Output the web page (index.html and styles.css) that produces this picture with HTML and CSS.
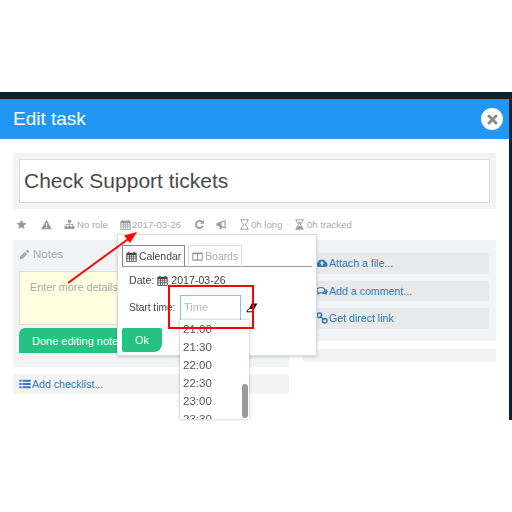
FILE: index.html
```html
<!DOCTYPE html>
<html lang="en">
<head>
<meta charset="utf-8">
<title>Edit task</title>
<link rel="stylesheet" href="styles.css">
</head>
<body>
<svg class="defs" width="0" height="0" aria-hidden="true">
  <defs>
    <symbol id="i-cal" viewBox="0 0 12 12"><path fill="currentColor" fill-rule="evenodd" d="M1 2h1.5V.8h1.2V2h4.6V.8h1.2V2H11a.6.6 0 0 1 .6.6v8.6a.6.6 0 0 1-.6.6H1a.6.6 0 0 1-.6-.6V2.600A.6.6 0 0 1 1 2zM1.400 4.500v1.600h2v-1.600zm2.800 0v1.600h1.500v-1.600zm2.200 0v1.600h1.500v-1.600zm2.200 0v1.600h2v-1.600zM1.400 6.800v1.500h2V6.800zm2.800 0v1.500h1.500V6.800zm2.200 0v1.500h1.500V6.800zm2.200 0v1.500h2V6.800zM1.400 9v1.800h2V9zm2.800 0v1.800h1.500V9zm2.200 0v1.800h1.500V9zm2.200 0v1.800h2V9z"/></symbol>
    <symbol id="i-star" viewBox="0 0 12 12"><path fill="currentColor" d="M6 .7l1.700 3.500 3.800.5-2.800 2.700.7 3.800L6 8.900l-3.400 1.800.7-3.800L.5 4.700l3.800-.5z"/></symbol>
    <symbol id="i-warn" viewBox="0 0 12 12"><path fill="currentColor" fill-rule="evenodd" d="M6 .8l5.800 10.400H.2zM5.300 4.300l.2 3.700h1l.2-3.700zm0 4.500v1.300h1.400V8.800z"/></symbol>
    <symbol id="i-role" viewBox="0 0 12 12"><path fill="currentColor" d="M4.300 1h3.400v3H6.400v1.500h3.800V8h1.300v3H8V8h1.300V6.400H6.400V8h1.300v3H4.300V8h1.300V6.400H2.700V8H4v3H.5V8h1.300V5.500h3.800V4H4.300z"/></symbol>
    <symbol id="i-redo" viewBox="0 0 12 12"><path fill="none" stroke="currentColor" stroke-width="1.900" d="M9.600 7.500A3.900 3.900 0 1 1 8.900 3.400"/><path fill="currentColor" d="M11 .8v4.400H6.600z"/></symbol>
    <symbol id="i-horn" viewBox="0 0 12 12"><path fill="currentColor" fill-rule="evenodd" d="M.5 4.500L10.500 1v9.500L6 8.800l.5 2.200H4.300l-.6-3H2L.5 7.200zM9.300 2.800L6 4v3.400l3.300 1.300z"/></symbol>
    <symbol id="i-glass" viewBox="0 0 12 12"><path fill="none" stroke="currentColor" stroke-width="1" d="M1.500 .9h9M1.500 11.100h9M2.500 1c0 3 1.500 4 3 5-1.500 1-3 2-3 5M9.500 1c0 3-1.500 4-3 5 1.500 1 3 2 3 5"/></symbol>
    <symbol id="i-glass-full" viewBox="0 0 12 12"><path fill="none" stroke="currentColor" stroke-width="1" d="M1.500 .9h9M1.500 11.100h9M2.500 1c0 3 1.500 4 3 5-1.500 1-3 2-3 5M9.500 1c0 3-1.500 4-3 5 1.500 1 3 2 3 5"/><path fill="currentColor" d="M3.800 3.500h4.400L6 5.700zM2.800 10.800C3 8.600 5 8 6 7.300c1 .7 3 1.300 3.200 3.500z"/></symbol>
    <symbol id="i-pencil" viewBox="0 0 12 12"><path fill="currentColor" d="M8.300 1.200a1 1 0 0 1 1.400 0l1.100 1.100a1 1 0 0 1 0 1.400l-1 1-2.500-2.500zM6.600 2.900l2.500 2.500-5.400 5.400L.6 11.400l.6-3.100z"/></symbol>
    <symbol id="i-cloud" viewBox="0 0 13 12"><path fill="currentColor" fill-rule="evenodd" d="M3 10.300A2.700 2.700 0 0 1 2.300 5 3 3 0 0 1 6 2.600 3.200 3.200 0 0 1 10.500 4.800a2.800 2.800 0 0 1-.5 5.500zM6.500 3.800L4 6.500h1.600v2.300h1.800V6.500H9z"/></symbol>
    <symbol id="i-comment" viewBox="0 0 13 12"><path fill="none" stroke="currentColor" stroke-width="1.200" d="M5.200 2.200c2.400 0 4.200 1.200 4.200 2.900S7.600 8 5.200 8c-.5 0-.9 0-1.300-.1L2 9.200l.4-1.800C1.500 6.900 1 6.100 1 5.100c0-1.700 1.800-2.900 4.200-2.900z"/><path fill="currentColor" d="M10.300 3.700c1.500.5 2.400 1.500 2.400 2.700 0 .9-.5 1.700-1.300 2.200l.4 1.900-2-1.200c-1.400.2-2.800-.1-3.700-.9 2.800 0 4.900-1.800 4.200-4.700z"/></symbol>
    <symbol id="i-link" viewBox="0 0 12 12"><g fill="none" stroke="currentColor" stroke-width="1.500"><circle cx="3.300" cy="3.300" r="2.300"/><circle cx="8.700" cy="8.700" r="2.300"/><path d="M4 4l4 4"/></g></symbol>
    <symbol id="i-list" viewBox="0 0 12 12"><path fill="currentColor" d="M.3 1.800h2.200v2H.3zM3.500 1.800h8.200v2H3.500zM.3 5h2.200v2H.3zM3.500 5h8.200v2H3.500zM.3 8.200h2.200v2H.3zM3.500 8.200h8.200v2H3.500z"/></symbol>
    <symbol id="i-cols" viewBox="0 0 12 12"><path fill="currentColor" fill-rule="evenodd" d="M1 1.500h10a.7.7 0 0 1 .7.7v7.600a.7.700 0 0 1-.7.700H1a.7.7 0 0 1-.7-.7V2.200A.7.7 0 0 1 1 1.500zM1.400 3.600v5.700h4V3.600zm5.200 0v5.700h4V3.600z"/></symbol>
  </defs>
</svg>

<div class="page">
  <div class="topbar"></div>
  <div class="frame">
    <main class="modal">
      <header class="modal-head">
        <h1 class="modal-title">Edit task</h1>
        <button class="close" type="button" aria-label="Close">
          <svg width="11" height="11" viewBox="0 0 11 11"><path d="M2 2l7 7M9 2l-7 7" stroke="#8a8a8a" stroke-width="3" stroke-linecap="round"/></svg>
        </button>
      </header>

      <div class="modal-body">
        <section class="title-well">
          <div class="title-input">Check Support tickets</div>
        </section>

        <nav class="meta">
          <span class="meta-item m-star"><svg class="ic"><use href="#i-star"/></svg></span>
          <span class="meta-item m-warn"><svg class="ic"><use href="#i-warn"/></svg></span>
          <span class="meta-item m-role"><svg class="ic"><use href="#i-role"/></svg>No role</span>
          <span class="meta-item m-date"><svg class="ic"><use href="#i-cal"/></svg>2017-03-26</span>
          <span class="meta-item m-redo"><svg class="ic"><use href="#i-redo"/></svg></span>
          <span class="meta-item m-horn"><svg class="ic"><use href="#i-horn"/></svg></span>
          <span class="meta-item m-long"><svg class="ic"><use href="#i-glass"/></svg>0h long</span>
          <span class="meta-item"><svg class="ic"><use href="#i-glass-full"/></svg>0h tracked</span>
        </nav>

        <div class="columns">
          <div class="col-left">
            <section class="notes">
              <div class="notes-label"><svg class="ic"><use href="#i-pencil"/></svg>Notes</div>
              <div class="notes-area">Enter more details</div>
              <button class="btn btn-done" type="button">Done editing notes</button>
            </section>
            <div class="checklist"><a class="action"><svg class="ic ic-l"><use href="#i-list"/></svg>Add checklist...</a></div>
          </div>
          <div class="col-right">
            <section class="actions">
              <a class="action row"><svg class="ic ic-l"><use href="#i-cloud"/></svg>Attach a file...</a>
              <a class="action row"><svg class="ic ic-l"><use href="#i-comment"/></svg>Add a comment...</a>
              <a class="action row"><svg class="ic ic-l"><use href="#i-link"/></svg>Get direct link</a>
            </section>
            <div class="empty-well"></div>
          </div>
        </div>
      </div>
    </main>
    <div class="edge"></div>
  </div>
</div>

<aside class="popup">
  <div class="tabs">
    <span class="tab tab-on"><svg class="ic"><use href="#i-cal"/></svg>Calendar</span>
    <span class="tab"><svg class="ic"><use href="#i-cols"/></svg>Boards</span>
  </div>
  <div class="pop-date">Date: <svg class="ic"><use href="#i-cal"/></svg>2017-03-26</div>
  <div class="pop-time">
    <span class="pop-time-label">Start time:</span>
    <span class="time-input">Time</span>
    <svg class="eraser" width="12" height="10" viewBox="0 0 12 10"><path d="M5.500.5H11.500L7.500 7H2.500z" fill="#111"/><path d="M2.500 6L.8 8.800H6L7.500 6" fill="#fff" stroke="#111" stroke-width="1"/></svg>
  </div>
  <button class="btn btn-ok" type="button">Ok</button>
</aside>

<div class="dropdown">
  <div class="times">
    <div class="time">21:00</div>
    <div class="time">21:30</div>
    <div class="time">22:00</div>
    <div class="time">22:30</div>
    <div class="time">23:00</div>
    <div class="time">23:30</div>
  </div>
  <div class="thumb"></div>
</div>

<div class="highlight"></div>
<svg class="arrow" width="80" height="60" viewBox="0 0 80 60">
  <path d="M1 52L64 6" stroke="#f00" stroke-width="2" fill="none"/>
  <path d="M70 1L57 4.500L63 12z" fill="#f00"/>
</svg>
</body>
</html>
```

FILE: styles.css
```css
* { box-sizing: border-box; }
html, body { margin: 0; padding: 0; }
body {
  width: 512px;
  height: 512px;
  overflow: hidden;
  position: relative;
  background: #fff;
  font-family: "Liberation Sans", Arial, sans-serif;
  color: #444;
}
.defs { position: absolute; }
a { text-decoration: none; }

.page { padding-top: 92px; filter: blur(0.5px); }
.topbar { height: 7px; background: #0b2233; }
.frame { display: flex; height: 321px; }
.modal { width: 509px; background: #fff; }
.edge { width: 3px; background: #0b2233; }

.modal-head {
  height: 40px;
  background: #2196f3;
  display: flex;
  align-items: center;
  justify-content: space-between;
  padding: 0 6px 0 13px;
}
.modal-title { margin: 0; font-size: 19px; font-weight: 400; color: #fff; }
.close {
  width: 22px;
  height: 22px;
  border: 0;
  padding: 0;
  border-radius: 50%;
  background: #fff;
  display: flex;
  align-items: center;
  justify-content: center;
}

.modal-body { padding: 14px 13px 0; }
.title-well { background: #f2f3f5; padding: 6px; height: 56px; }
.title-input {
  height: 44px;
  background: #fff;
  border: 1.5px solid #ddd;
  font-size: 21px;
  line-height: 41px;
  padding-left: 4px;
  color: #4a4a4a;
}

.ic { width: 11px; height: 11px; flex: none; }
.meta {
  height: 31px;
  display: flex;
  align-items: center;
  padding-left: 3px;
  font-size: 9.600px;
  color: #aaa;
}
.meta .ic { color: #999; margin-right: 2px; }
.meta-item { display: flex; align-items: center; }
.m-star { width: 25px; }
.m-warn { width: 23px; }
.m-role { width: 56px; }
.m-date { width: 74px; }
.m-date .ic { margin-right: 1px; }
.m-redo { width: 22px; }
.m-horn { width: 23px; }
.m-long { width: 55px; }
.m-long .ic { margin-right: 1px; }

.columns { display: flex; gap: 14px; }
.col-left { width: 276px; }
.col-right { width: 193px; }

.notes { background: #f2f3f5; height: 127px; padding: 7px 6px 0; }
.notes-label {
  display: flex;
  align-items: center;
  gap: 3px;
  font-size: 11.500px;
  height: 14px;
  color: #aaa;
}
.notes-label .ic { color: #aaa; }
.notes-area {
  margin-top: 10px;
  height: 54px;
  background: #ffffe0;
  border: 1px solid #ddd;
  padding: 9px 10px;
  font-size: 10.800px;
  color: #aaa;
}
.btn {
  display: block;
  border: 0;
  background: #26c281;
  color: #fff;
  font-family: inherit;
  font-size: 11px;
  padding: 0;
}
.btn-done {
  margin-top: 3px;
  width: 112px;
  height: 25px;
  border-radius: 6px 6px 0 0;
  text-align: left;
  padding-left: 13px;
  white-space: nowrap;
  overflow: hidden;
}
.checklist {
  margin-top: 7px;
  height: 20px;
  background: #f2f3f5;
  padding-left: 6px;
  display: flex;
  align-items: center;
}
.action {
  font-size: 10.600px;
  color: #337ab7;
  display: flex;
  align-items: center;
}
.action .ic { width: 12px; height: 12px; }
.ic-l { margin-right: 1px; }

.actions {
  background: #f2f3f5;
  height: 101px;
  padding: 13px 7px 0 6px;
  display: flex;
  flex-direction: column;
  gap: 7px;
}
.row {
  height: 20.500px;
  background: #e8e9eb;
  border-radius: 2px;
  padding-left: 7px;
}
.empty-well { margin-top: 8px; height: 13px; background: #f2f3f5; }

/* Overlays lying over the modal */
.popup {
  position: absolute;
  left: 117px;
  top: 234px;
  width: 200px;
  height: 122px;
  background: #fff;
  border: 1px solid #ddd;
  box-shadow: 0 1px 3px rgba(0, 0, 0, .18);
  padding: 10px 4px 0;
  font-size: 10.600px;
  filter: blur(0.5px);
}
.tabs {
  display: flex;
  gap: 3px;
  height: 22px;
  border-bottom: 1px solid #999;
  font-size: 10.400px;
}
.tab {
  display: flex;
  align-items: center;
  gap: 2px;
  height: 22px;
  padding: 0 3px;
  border: 1px solid #ddd;
  border-bottom: 0;
  color: #aaa;
}
.tab .ic { color: #999; }
.tab-on { border-color: #888; color: #444; }
.tab-on .ic { color: #444; }
.pop-date {
  display: flex;
  align-items: center;
  gap: 3px;
  margin: 6px 0 0 7px;
  height: 14px;
}
.pop-date .ic { color: #444; }
.pop-time {
  display: flex;
  align-items: center;
  margin: 7px 0 0 7px;
  height: 27px;
}
.pop-time-label { width: 51px; flex: none; font-size: 10.200px; }
.time-input {
  width: 61px;
  height: 26px;
  border: 1.500px solid #7ec4f5;
  padding: 0 3px;
  line-height: 23px;
  color: #bbb;
  font-size: 11px;
}
.eraser { margin: 0 0 0 5px; flex: none; }
.btn-ok {
  margin-top: 7px;
  width: 40px;
  height: 24px;
  border-radius: 2px 2px 8px 2px;
  text-align: center;
}
.dropdown {
  position: absolute;
  left: 180px;
  top: 320px;
  width: 69px;
  height: 99px;
  background: #fff;
  box-shadow: 0 0 3px rgba(0, 0, 0, .3);
  overflow: hidden;
  filter: blur(0.5px);
}
.times { padding-left: 3px; font-size: 11.500px; color: #555; }
.time { height: 18px; line-height: 18px; }
.thumb {
  position: absolute;
  right: 1px;
  top: 64px;
  width: 6px;
  height: 34px;
  border-radius: 3px;
  background: #9a9a9a;
}
.highlight {
  position: absolute;
  left: 168px;
  top: 285px;
  width: 86px;
  height: 44px;
  border: 2px solid #f00;
}
.arrow { position: absolute; left: 67px; top: 231px; }
```
